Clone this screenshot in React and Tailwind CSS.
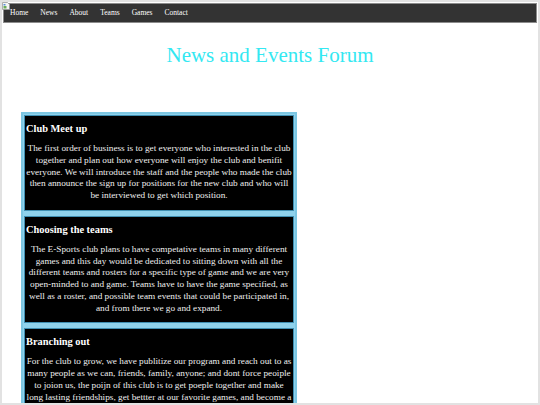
const navLinks = ['Home', 'News', 'About', 'Teams', 'Games', 'Contact'];

const posts = [
  {
    title: 'Club Meet up',
    body: 'The first order of business is to get everyone who interested in the club together and plan out how everyone will enjoy the club and benifit everyone. We will introduce the staff and the people who made the club then announce the sign up for positions for the new club and who will be interviewed to get which position.',
  },
  {
    title: 'Choosing the teams',
    body: 'The E-Sports club plans to have competative teams in many different games and this day would be dedicated to sitting down with all the different teams and rosters for a specific type of game and we are very open-minded to and game. Teams have to have the game specified, as well as a roster, and possible team events that could be participated in, and from there we go and expand.',
  },
  {
    title: 'Branching out',
    body: 'For the club to grow, we have publitize our program and reach out to as many people as we can, friends, family, anyone; and dont force peoiple to joion us, the poijn of this club is to get poeple together and make long lasting friendships, get bettter at our favorite games, and become a one big family.',
  },
];

const BrokenImage = () => (
  <svg className="absolute left-0 top-0" width="8" height="8" viewBox="0 0 8 8">
    <path d="M0.5 0.5h5l2 2v5h-7z" fill="#f4f4f4" stroke="#9a9a9a" strokeWidth="0.8" />
    <rect x="1.5" y="4" width="3" height="2.5" fill="#6cab5a" />
    <rect x="1.5" y="2" width="2" height="1.5" fill="#5b8fd6" />
  </svg>
);

export default function App() {
  return (
    <div
      className="relative h-[405px] w-full overflow-hidden border-2 border-[#e2e2e2] bg-white"
      style={{ fontFamily: '"Liberation Serif", "Times New Roman", serif' }}
    >
      <BrokenImage />

      <nav className="mx-px mt-px flex h-[20px] items-center gap-[12px] border border-[#8c8c8c] bg-[#333333] pl-[6px]">
        {navLinks.map((link) => (
          <a key={link} className="text-[7.5px] leading-none text-white">
            {link}
          </a>
        ))}
      </nav>

      <h1 className="mt-[20px] text-center text-[21px] leading-[25px] text-[#33e8f2]">News and Events Forum</h1>

      <div className="ml-[19px] mt-[44px] flex w-[276px] flex-col gap-[5px] border-2 border-[#7cc6e2] bg-[#8fd2ec] p-px">
        {posts.map((post) => (
          <div key={post.title} className="border border-[#3f8fb2] bg-black px-px text-white">
            <h3 className="mt-[7px] text-[10.4px] font-bold leading-[12px]">{post.title}</h3>
            <p className="mb-[8px] mt-[8px] text-center text-[9.25px] leading-[11.75px] text-[#eeeeee]">{post.body}</p>
          </div>
        ))}
      </div>
    </div>
  );
}
